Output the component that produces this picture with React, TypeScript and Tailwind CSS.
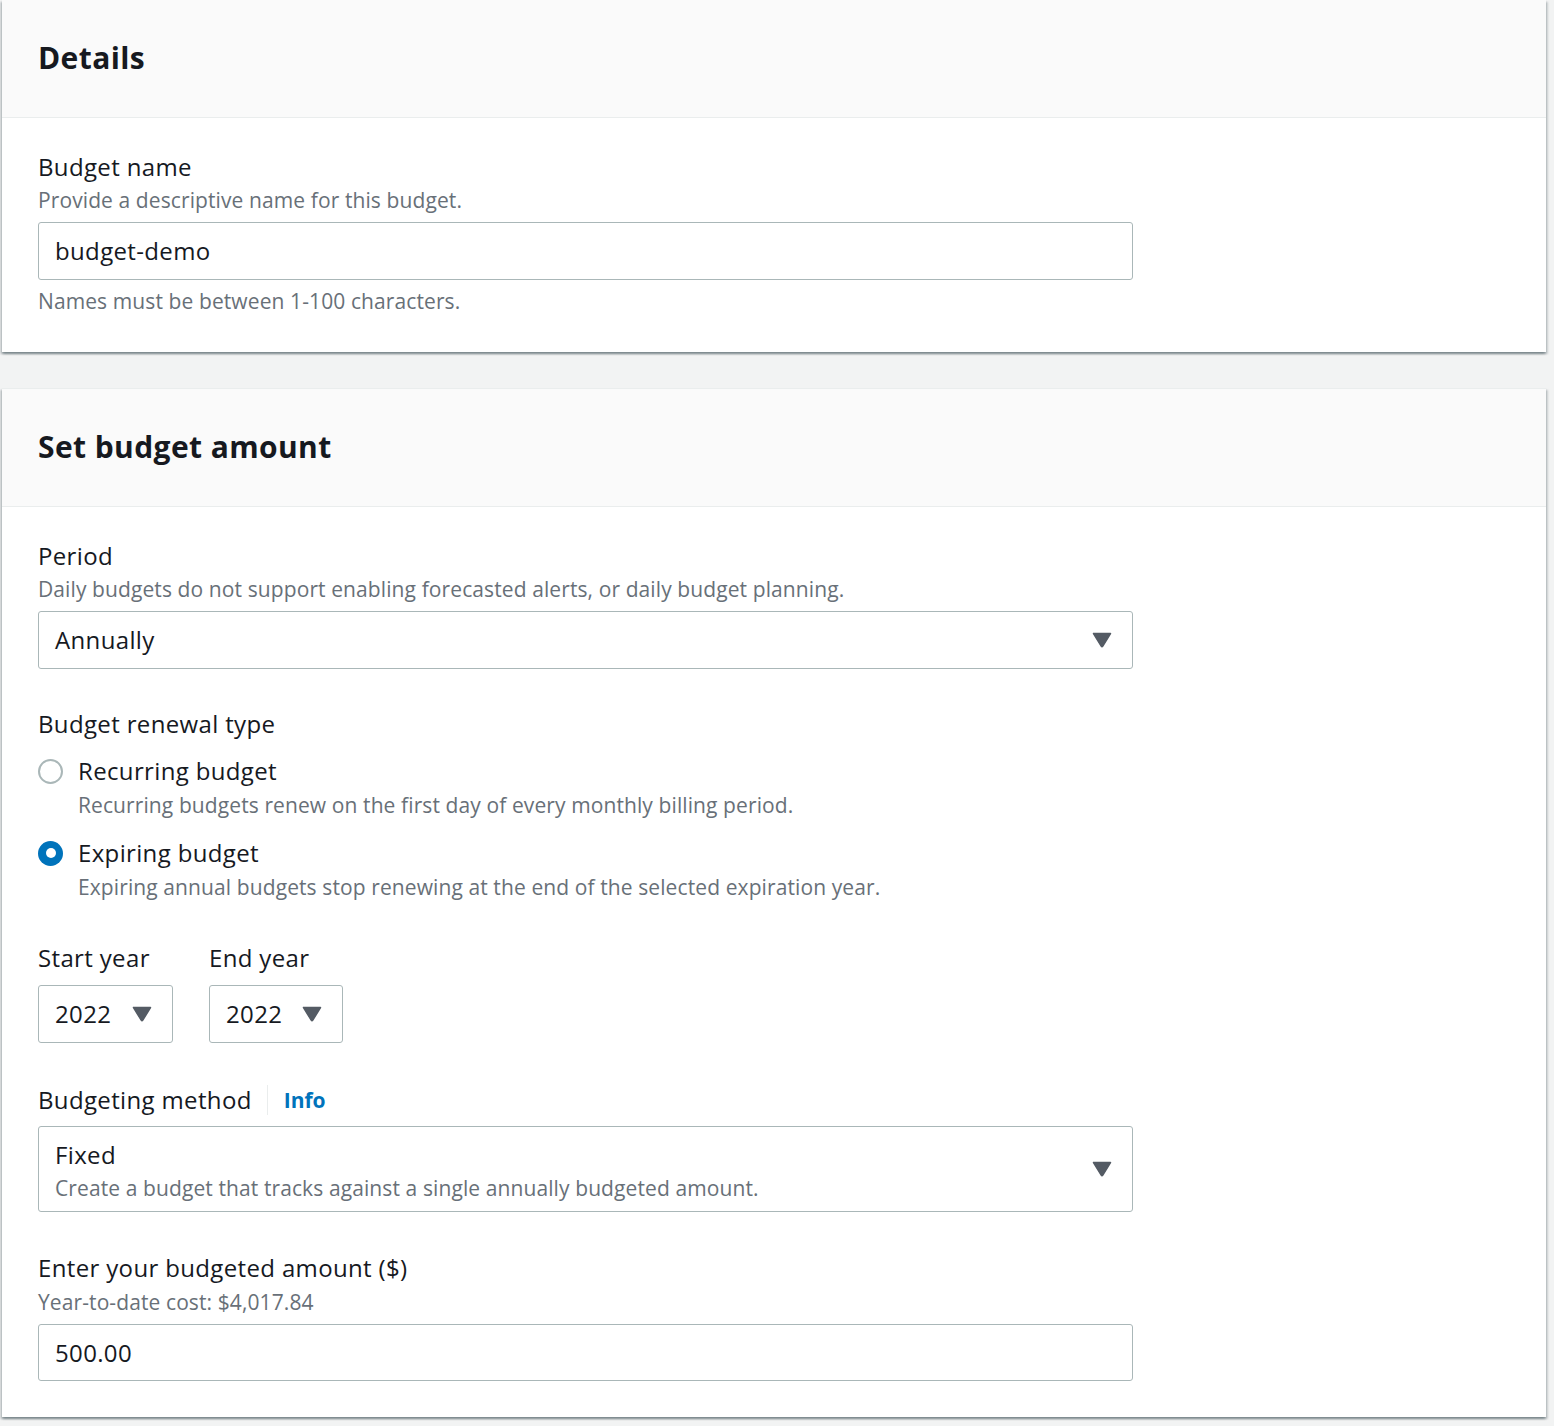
import React from "react";

const font = { fontFamily: '"Open Sans", "Liberation Sans", Arial, sans-serif' };

function Caret() {
  return (
    <svg width="20" height="16" viewBox="0 0 20 16" className="shrink-0">
      <path d="M1.5 1.5 L18.5 1.5 L10.8 14.2 Q10 15.4 9.2 14.2 Z" fill="#545b64" stroke="#545b64" strokeWidth="1.5" strokeLinejoin="round" />
    </svg>
  );
}

function Label({ children }: { children: React.ReactNode }) {
  return <div className="text-[24px] leading-[32px] tracking-[0.35px] text-[#16191f]">{children}</div>;
}

function Desc({ children, className = "" }: { children: React.ReactNode; className?: string }) {
  return <div className={"text-[21px] leading-[28px] tracking-[0.1px] text-[#687078] " + className}>{children}</div>;
}

function Header({ title }: { title: string }) {
  return (
    <div className="bg-[#fafafa] border-b border-[#eaeded] px-[36px] pt-[38px] pb-[39px]">
      <h2 className="text-[30px] leading-[40px] font-bold tracking-[0.4px] text-[#16191f]">{title}</h2>
    </div>
  );
}

const cardShadow =
  "bg-white shadow-[0_2px_2px_0_rgba(0,28,36,0.3),2px_2px_2px_0_rgba(0,28,36,0.15),-2px_2px_2px_0_rgba(0,28,36,0.15)]";

function Radio({ checked }: { checked: boolean }) {
  return checked ? (
    <div className="w-[25px] h-[25px] rounded-full bg-[#0073bb] flex items-center justify-center shrink-0">
      <div className="w-[10px] h-[10px] rounded-full bg-white" />
    </div>
  ) : (
    <div className="w-[25px] h-[25px] rounded-full border-2 border-[#aab7b8] bg-white shrink-0" />
  );
}

export default function App() {
  return (
    <div style={font} className="bg-[#f2f3f3] min-h-[1426px] pl-[2px] pr-[8px] pb-[9px]">
      {/* Details card */}
      <div className={cardShadow}>
        <Header title="Details" />
        <div className="px-[36px] pt-[33px] pb-[37px]">
          <Label>Budget name</Label>
          <Desc className="mt-[3px]">Provide a descriptive name for this budget.</Desc>
          <div className="mt-[8px] w-[1095px] h-[58px] border border-[#aab7b8] rounded-[3px] flex items-center pl-[16px] text-[24px] tracking-[0.35px] text-[#16191f]">
            budget-demo
          </div>
          <Desc className="mt-[7px]">Names must be between 1-100 characters.</Desc>
        </div>
      </div>

      {/* Set budget amount card */}
      <div className={cardShadow + " mt-[36px] border-t border-[#eaeded]"}>
        <Header title="Set budget amount" />
        <div className="px-[36px] pt-[33px] pb-[36px]">
          {/* Period */}
          <Label>Period</Label>
          <Desc className="mt-[3px]">Daily budgets do not support enabling forecasted alerts, or daily budget planning.</Desc>
          <div className="mt-[8px] w-[1095px] h-[58px] border border-[#aab7b8] rounded-[3px] flex items-center justify-between pl-[16px] pr-[20px] text-[24px] tracking-[0.35px] text-[#16191f]">
            <span>Annually</span>
            <Caret />
          </div>

          {/* Renewal type */}
          <div className="mt-[39px]">
            <Label>Budget renewal type</Label>
            <div className="mt-[15px] flex items-center gap-[15px]">
              <Radio checked={false} />
              <div className="text-[24px] leading-[32px] tracking-[0.35px] text-[#16191f]">Recurring budget</div>
            </div>
            <Desc className="mt-[4px] pl-[40px]">Recurring budgets renew on the first day of every monthly billing period.</Desc>
            <div className="mt-[18px] flex items-center gap-[15px]">
              <Radio checked={true} />
              <div className="text-[24px] leading-[32px] tracking-[0.35px] text-[#16191f]">Expiring budget</div>
            </div>
            <Desc className="mt-[4px] pl-[40px]">Expiring annual budgets stop renewing at the end of the selected expiration year.</Desc>
          </div>

          {/* Years */}
          <div className="mt-[41px] flex gap-[36px]">
            <div>
              <Label>Start year</Label>
              <div className="mt-[11px] w-[135px] h-[58px] border border-[#aab7b8] rounded-[3px] flex items-center justify-between pl-[16px] pr-[20px] text-[24px] tracking-[0.35px] text-[#16191f]">
                <span>2022</span>
                <Caret />
              </div>
            </div>
            <div>
              <Label>End year</Label>
              <div className="mt-[11px] w-[134px] h-[58px] border border-[#aab7b8] rounded-[3px] flex items-center justify-between pl-[16px] pr-[20px] text-[24px] tracking-[0.35px] text-[#16191f]">
                <span>2022</span>
                <Caret />
              </div>
            </div>
          </div>

          {/* Budgeting method */}
          <div className="mt-[41px] flex items-center">
            <Label>Budgeting method</Label>
            <div className="ml-[15px] w-px h-[30px] bg-[#eaeded]" />
            <span className="ml-[16px] text-[21px] leading-[28px] font-bold text-[#0073bb]">Info</span>
          </div>
          <div className="mt-[10px] w-[1095px] h-[86px] border border-[#aab7b8] rounded-[3px] flex items-center justify-between pl-[16px] pr-[20px]">
            <div className="pt-[2px]">
              <div className="text-[24px] leading-[32px] tracking-[0.35px] text-[#16191f]">Fixed</div>
              <Desc className="mt-[3px]">Create a budget that tracks against a single annually budgeted amount.</Desc>
            </div>
            <Caret />
          </div>

          {/* Amount */}
          <div className="mt-[40px]">
            <Label>Enter your budgeted amount ($)</Label>
            <Desc className="mt-[4px]">Year-to-date cost: $4,017.84</Desc>
            <div className="mt-[8px] w-[1095px] h-[57px] border border-[#aab7b8] rounded-[3px] flex items-center pl-[16px] text-[24px] tracking-[0.35px] text-[#16191f]">
              500.00
            </div>
          </div>
        </div>
      </div>
    </div>
  );
}
